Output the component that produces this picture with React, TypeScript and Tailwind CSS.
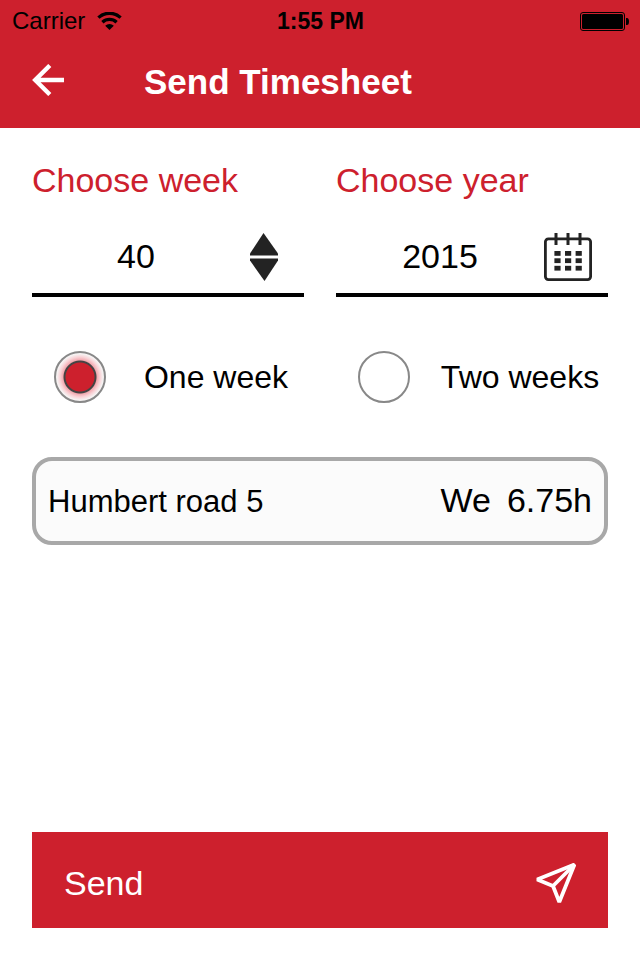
import { useState } from 'react';

const RADIO_BASE =
  'block size-[52px] shrink-0 appearance-none rounded-full border-2 border-[#888888] bg-white checked:bg-[radial-gradient(circle_at_center,#cd202d_14px,#444444_15px,#444444_16px,#f2a9b0_17px,#f9d3d7_20px,#f6f2f2_23px,#f6f6f6_26px)]';

const PERIODS = [
  { value: 'one', label: 'One week' },
  { value: 'two', label: 'Two weeks' },
];

const ENTRIES = [{ place: 'Humbert road 5', day: 'We', hours: '6.75h' }];

function WifiIcon() {
  return (
    <svg className="h-[19px] w-[25px]" viewBox="0 0 25 19" fill="none" stroke="black" strokeWidth={3.3}>
      <path d="M1.4 5.6A16.4 16.4 0 0 1 23.6 5.6" />
      <path d="M5.4 10.2A10.4 10.4 0 0 1 19.6 10.2" />
      <path stroke="none" fill="black" d="M12.5 18L8.2 13.7A6.4 6.4 0 0 1 16.8 13.7Z" />
    </svg>
  );
}

function BatteryIcon() {
  return (
    <svg className="h-[19px] w-[49px]" viewBox="0 0 49 19">
      <rect x="0.5" y="0.5" width="44" height="18" rx="2.5" fill="none" stroke="black" />
      <rect x="2" y="2" width="41" height="15" rx="1.5" fill="black" />
      <path d="M46 6h1a2 3.5 0 0 1 0 7h-1z" fill="black" />
    </svg>
  );
}

function CalendarIcon() {
  return (
    <svg className="size-12" viewBox="0 0 48 48" fill="#232323">
      <rect x="1.4" y="5.8" width="45.2" height="40.8" rx="3" fill="none" stroke="#232323" strokeWidth={2.8} />
      {[12, 24, 36].map((x) => (
        <rect key={x} x={x - 1.5} y="0" width="3" height="12" />
      ))}
      {[18, 25.3, 32.8].map((y) =>
        [10.4, 21, 31.6].map((x) => <rect key={`${x}-${y}`} x={x} y={y} width="6.2" height="4.8" />)
      )}
    </svg>
  );
}

export default function App() {
  const [week, setWeek] = useState(40);
  const [year, setYear] = useState('2015');
  const [period, setPeriod] = useState('one');

  return (
    <div className="flex min-h-screen flex-col bg-white font-['Liberation_Sans',Arial,sans-serif] text-black">
      {/* Header */}
      <header className="bg-[#cd202d] pb-2">
        <div className="grid h-10 grid-cols-3 items-center pt-0.5 pr-[11px] pl-3 text-2xl">
          <div className="flex items-center gap-3">
            <span>Carrier</span>
            <WifiIcon />
          </div>
          <span className="text-center text-[23px] font-bold">1:55 PM</span>
          <div className="flex justify-end">
            <BatteryIcon />
          </div>
        </div>

        <div className="flex h-20 items-center gap-20 px-8">
          <button type="button" aria-label="Back">
            <svg className="size-8" viewBox="0 0 32 32" fill="none" stroke="white" strokeWidth={4.4}>
              <path d="M32 16H3M17.8 1.5L3.2 16l14.6 14.5" />
            </svg>
          </button>
          <h1 className="pt-1 text-[35px] font-bold text-white">Send Timesheet</h1>
        </div>
      </header>

      <main className="flex flex-1 flex-col p-8">
        {/* Week and year */}
        <div className="grid grid-cols-2 gap-8 text-[34px]">
          <div>
            <label htmlFor="week" className="block leading-10 text-[#cd202d]">
              Choose week
            </label>
            <div className="mt-[21px] flex items-center border-b-4 border-black py-3 pr-4">
              <input
                id="week"
                inputMode="numeric"
                className="h-12 min-w-0 flex-1 pb-0.5 text-center outline-none"
                value={week}
                onChange={(e) => setWeek(Number(e.target.value) || 0)}
              />
              <div className="flex w-12 flex-col items-center">
                <button type="button" aria-label="Next week" onClick={() => setWeek(week + 1)}>
                  <svg className="h-6 w-7" viewBox="0 0 28 24" fill="#232323">
                    <path d="M13.5 0L28 20.5V22.5H0V20.5Z" />
                  </svg>
                </button>
                <button type="button" aria-label="Previous week" onClick={() => setWeek(week - 1)}>
                  <svg className="h-6 w-7" viewBox="0 0 28 24" fill="#232323">
                    <path d="M14.5 24L0 3.5V1.5H28V3.5Z" />
                  </svg>
                </button>
              </div>
            </div>
          </div>

          <div>
            <label htmlFor="year" className="block leading-10 text-[#cd202d]">
              Choose year
            </label>
            <div className="mt-[21px] flex items-center border-b-4 border-black py-3 pr-4">
              <input
                id="year"
                inputMode="numeric"
                className="h-12 min-w-0 flex-1 pb-0.5 text-center outline-none"
                value={year}
                onChange={(e) => setYear(e.target.value)}
              />
              <button type="button" aria-label="Open calendar">
                <CalendarIcon />
              </button>
            </div>
          </div>
        </div>

        {/* Period */}
        <div className="my-8 grid h-24 grid-cols-2 items-center gap-8 text-[32px]">
          {PERIODS.map((item) => (
            <label key={item.value} className="flex items-center">
              <span className="flex w-24 shrink-0 justify-center">
                <input
                  type="radio"
                  name="period"
                  value={item.value}
                  checked={period === item.value}
                  onChange={() => setPeriod(item.value)}
                  className={RADIO_BASE}
                />
              </span>
              <span className="flex-1 text-center whitespace-nowrap">{item.label}</span>
            </label>
          ))}
        </div>

        {/* Entries */}
        <ul className="mb-8 flex flex-col gap-4">
          {ENTRIES.map((entry) => (
            <li
              key={entry.place}
              className="flex h-[88px] items-center rounded-[20px] border-4 border-[#a8a8a8] bg-[#fbfbfb] px-3"
            >
              <div className="flex flex-1 items-baseline justify-between leading-12">
                <span className="text-[31px]">{entry.place}</span>
                <span className="flex gap-4 text-[34px]">
                  <span>{entry.day}</span>
                  <span>{entry.hours}</span>
                </span>
              </div>
            </li>
          ))}
        </ul>

        <button
          type="button"
          className="mt-auto flex h-24 items-center justify-between bg-[#cd202d] px-8 pt-1.5 text-[34px] text-white"
        >
          <span>Send</span>
          <svg className="size-10" viewBox="0 0 40 40" fill="none" stroke="white" strokeWidth={3.8} strokeLinejoin="bevel">
            <path d="M38.5 1.5L1.2 16.5L17 23L23.3 39Z" />
            <path d="M17 23L38.5 1.5" />
          </svg>
        </button>
      </main>
    </div>
  );
}
